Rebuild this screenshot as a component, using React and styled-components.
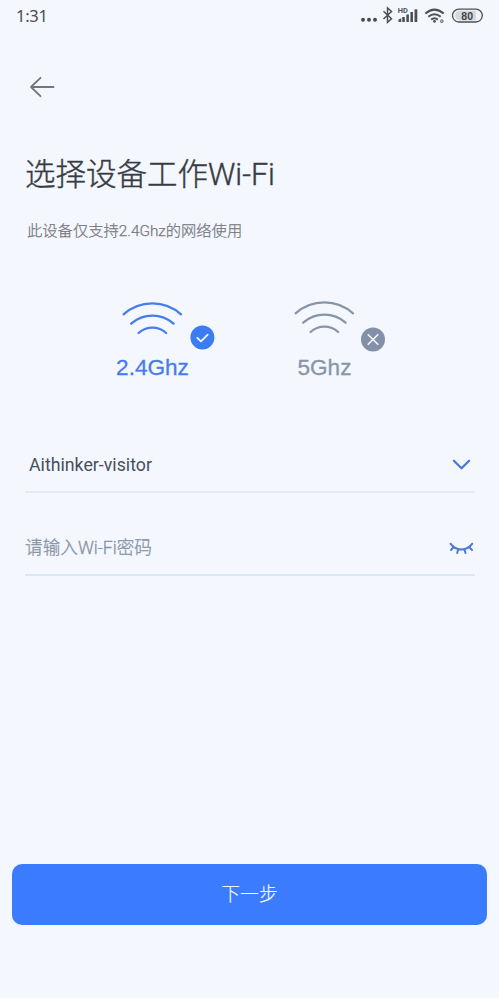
import React from "react";
import styled, { createGlobalStyle } from "styled-components";

const GlobalStyle = createGlobalStyle`
  * { box-sizing: border-box; }
  body { margin: 0; background: #f4f7fe; }
`;

const Screen = styled.main`
  width: 100%;
  min-height: 998px;
  display: flex;
  flex-direction: column;
  background: #f4f7fe;
  font-family: Roboto, "Noto Sans CJK SC", sans-serif;
  color: #373c43;
`;

const StatusBar = styled.header`
  height: 32px;
  padding: 0 15px 0 16px;
  display: flex;
  align-items: center;
  justify-content: space-between;
`;

const Time = styled.span`
  font: 400 16.5px/32px "Noto Sans", sans-serif;
  letter-spacing: -0.3px;
  color: #4a4d52;
`;

const StatusIcons = styled.svg`
  display: block;
  width: 124px;
  height: 32px;
`;

const BackButton = styled.button`
  width: 26px;
  height: 24px;
  margin: 43px 0 0 29px;
  padding: 0;
  border: 0;
  background: none;
  svg { display: block; }
`;

const Title = styled.h1`
  margin: 52px 0 0 25px;
  font-size: 30.5px;
  line-height: 48px;
  font-weight: 300;
  font-family: Roboto, "Noto Sans CJK SC Light", "Noto Sans CJK SC", sans-serif;
  -webkit-text-stroke: 0.4px currentColor;
`;

const Subtitle = styled.p`
  margin: 20px 0 0 27px;
  font-size: 15.3px;
  line-height: 24px;
  font-weight: 300;
  font-family: Roboto, "Noto Sans CJK SC Light", "Noto Sans CJK SC", sans-serif;
  -webkit-text-stroke: 0.25px currentColor;
  color: #77797e;
`;

const Bands = styled.section`
  margin-top: 53px;
  height: 90px;
  display: flex;
`;

const Band = styled.div`
  position: relative;
  width: 80px;
  margin-left: ${(p) => p.$gap}px;
  padding-top: ${(p) => p.$top}px;
  color: ${(p) => p.$color};
  display: flex;
  flex-direction: column;
  align-items: center;
`;

const BandLabel = styled.span`
  margin-top: ${(p) => p.$gap}px;
  padding-left: 1px;
  font: 400 22.6px/28px "Liberation Sans", Arial, sans-serif;
  -webkit-text-stroke: 0.3px currentColor;
  white-space: nowrap;
`;

const Badge = styled.svg`
  position: absolute;
  left: ${(p) => p.$left}px;
  top: ${(p) => p.$y}px;
`;

const Fields = styled.section`
  margin: 53px 24px 0 25px;
`;

const Field = styled.div`
  height: ${(p) => p.$height}px;
  padding: 0 0 13px ${(p) => p.$indent}px;
  border-bottom: 2px solid ${(p) => p.$line};
  display: flex;
  align-items: flex-end;
  justify-content: space-between;
  color: ${(p) => p.$color};
  font-size: 17.75px;
  line-height: 26px;
  svg { display: block; }
`;

const Placeholder = styled.span`
  font-size: 17.65px;
  font-weight: 300;
  font-family: Roboto, "Noto Sans CJK SC Light", "Noto Sans CJK SC", sans-serif;
  -webkit-text-stroke: 0.3px currentColor;
`;

const NextButton = styled.button`
  height: 61px;
  margin: auto 12px 73px;
  padding: 0 0 3px;
  border: 0;
  border-radius: 10px;
  background: #3b7cff;
  color: #eef6ff;
  font: 300 18.8px/28px "Noto Sans CJK SC Light", "Noto Sans CJK SC", sans-serif;
  -webkit-text-stroke: 0.2px currentColor;
`;

function WifiArcs() {
  return (
    <svg width="62" height="36" viewBox="121 300 62 36" fill="none" stroke="currentColor" strokeWidth="2.3" strokeLinecap="round">
      <path d="M123.6 314.3A43 43 0 0 1 181 314.3" />
      <path d="M131.2 323.7A32 32 0 0 1 173.6 323.7" />
      <path d="M138.6 333A20.5 20.5 0 0 1 166.2 333" />
    </svg>
  );
}

function PhoneStatus() {
  return (
    <StatusIcons viewBox="360 0 124 32" fill="none" stroke="#4d5056">
      <g fill="#484b50" stroke="none">
        <circle cx="363" cy="19.8" r="2" />
        <circle cx="369" cy="19.8" r="2" />
        <circle cx="375" cy="19.8" r="2" />
      </g>
      <path d="M383.5 11.3L391.5 18.7L387.5 22.3V8L391.5 11.5L383.5 19" strokeWidth="1.5" />
      <text x="397.8" y="13" fontSize="7.4" fontWeight="700" fontFamily="Roboto" fill="#4d5056" stroke="none">HD</text>
      <g fill="#4d5056" stroke="none">
        <path d="M398.5 22v-2.4l2.7-1.4v3.8z" />
        <rect x="402.2" y="17" width="2.6" height="5" />
        <rect x="406.3" y="14.5" width="2.6" height="7.5" />
        <rect x="410.4" y="12" width="2.6" height="10" />
        <rect x="414.5" y="9.3" width="2.8" height="12.7" />
      </g>
      <g strokeWidth="2">
        <path d="M425.3 13.6Q434.5 5.7 443.7 13.6" />
        <path d="M428.3 16.8Q434.5 11.7 440.7 16.8" />
        <path d="M431.2 19.6Q434.5 17 437.8 19.6" />
      </g>
      <circle cx="434.5" cy="21.3" r="1.4" fill="#4d5056" stroke="none" />
      <circle cx="441.8" cy="21.2" r="1.5" stroke="#85898f" fill="#a0a4a9" />
      <rect x="452.5" y="9.2" width="29.8" height="12.8" rx="6.4" fill="#f0f3f7" strokeWidth="1.3" />
      <path d="M460 10.7H476V20.5H460A4.9 4.9 0 0 1 460 10.7Z" fill="#d5d8dd" stroke="none" />
      <text x="467.2" y="19.5" textAnchor="middle" fontSize="10.5" fontWeight="700" fontFamily="Liberation Sans" fill="#414449" stroke="none">80</text>
    </StatusIcons>
  );
}

export default function App() {
  return (
    <Screen>
      <GlobalStyle />
      <StatusBar>
        <Time>1:31</Time>
        <PhoneStatus />
      </StatusBar>
      <BackButton aria-label="返回">
        <svg width="26" height="24" fill="none" stroke="#73767b" strokeWidth="1.8" strokeLinecap="round" strokeLinejoin="round">
          <path d="M24.5 12H2M11.5 2.8L2 12L11.5 21.2" />
        </svg>
      </BackButton>
      <Title>选择设备工作Wi-Fi</Title>
      <Subtitle>此设备仅支持2.4Ghz的网络使用</Subtitle>
      <Bands>
        <Band $gap={112} $top={4} $color="#467de8">
          <WifiArcs />
          <BandLabel $gap={18}>2.4Ghz</BandLabel>
          <Badge $left={78} $y={29} width="25" height="25" fill="none">
            <circle cx="12.4" cy="12.5" r="12" fill="#3c7cf2" />
            <path d="M7.3 12.8L11 16.4L17.7 9.6" stroke="#f4f8ff" strokeWidth="1.8" strokeLinecap="round" strokeLinejoin="round" />
          </Badge>
        </Band>
        <Band $gap={92} $top={3} $color="#8994a8">
          <WifiArcs />
          <BandLabel $gap={19}>5Ghz</BandLabel>
          <Badge $left={76} $y={31} width="25" height="25" fill="none">
            <circle cx="13" cy="12.5" r="12" fill="#8390a7" />
            <path d="M8.2 7.7L17.8 17.3M17.8 7.7L8.2 17.3" stroke="#f4f8ff" strokeWidth="1.6" strokeLinecap="round" />
          </Badge>
        </Band>
      </Bands>
      <Fields>
        <Field $height={54} $indent={4} $color="#484f5b" $line="#e5ebf2">
          <span>Aithinker-visitor</span>
          <svg width="26" height="26" fill="none" stroke="#477bd5" strokeWidth="2.3" strokeLinecap="round" strokeLinejoin="round">
            <path d="M4.9 8.7L12.5 16.3L20.1 8.7" />
          </svg>
        </Field>
        <Field $height={83} $indent={0} $color="#8793a6" $line="#dae6f4">
          <Placeholder>请输入Wi-Fi密码</Placeholder>
          <svg width="26" height="26" fill="none" stroke="#4c78d6" strokeWidth="2" strokeLinecap="round">
            <path d="M1.5 8.7C7 16.4 17.8 16.4 23.3 8.7M4.5 12.1L2.1 15M9.2 14.3L8.2 18M15.4 14.3L16.5 18M20.2 12.1L23 15" />
          </svg>
        </Field>
      </Fields>
      <NextButton>下一步</NextButton>
    </Screen>
  );
}
